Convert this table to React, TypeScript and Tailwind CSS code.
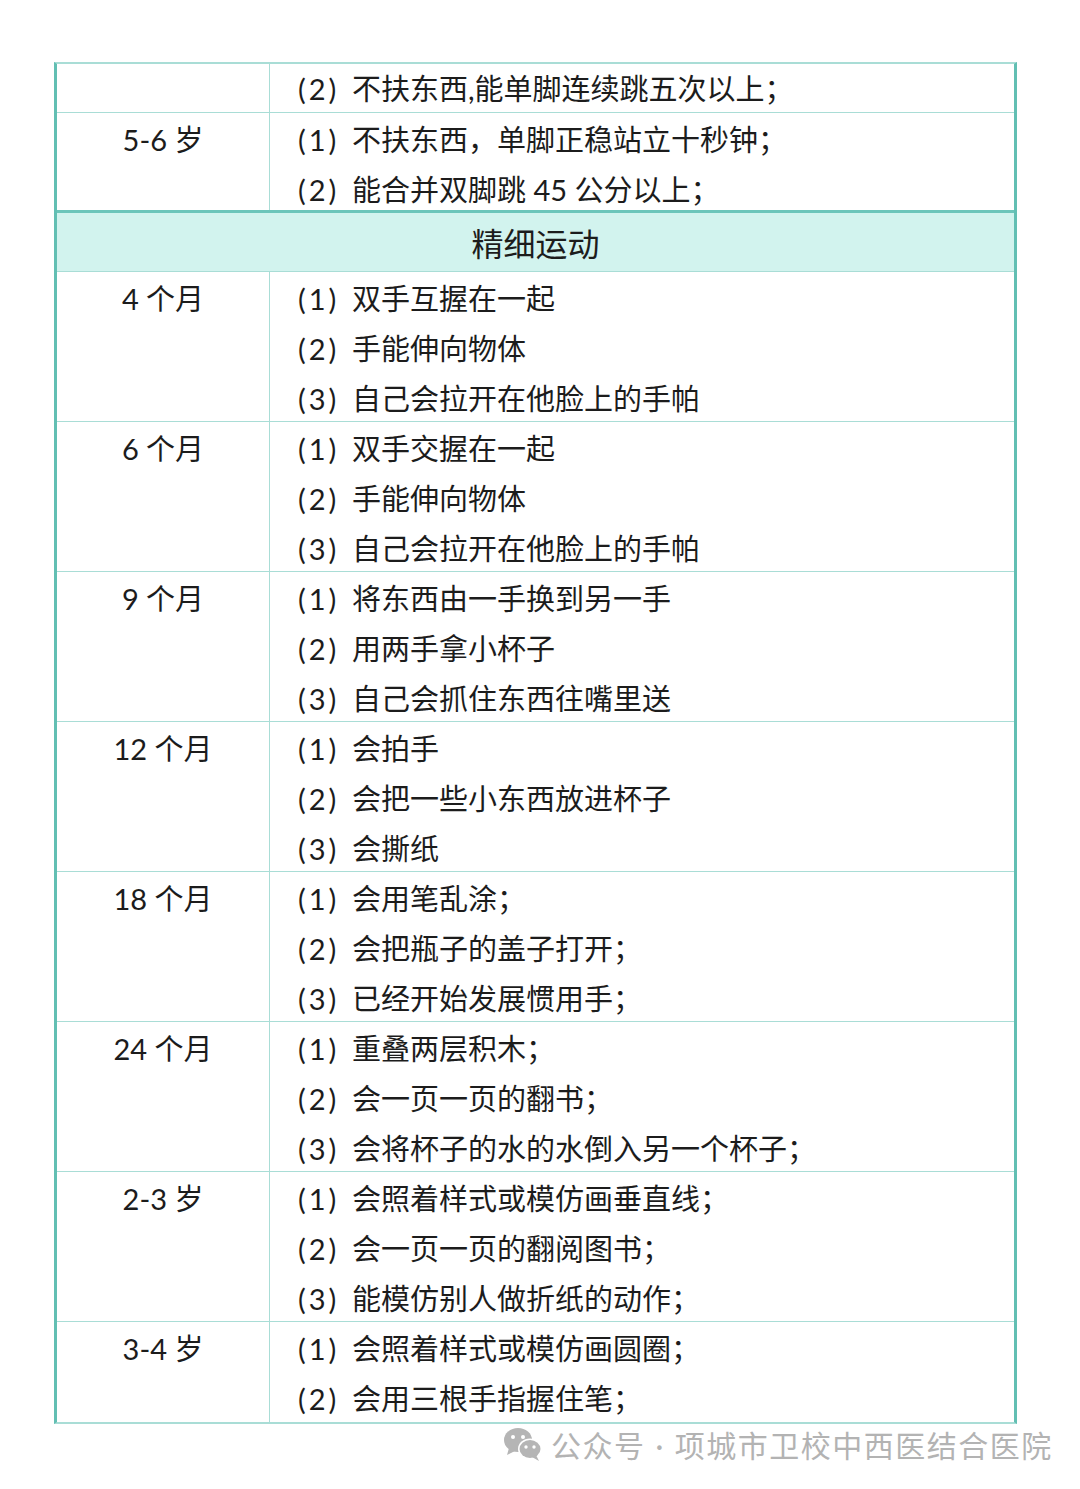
type Item = [number, string];

type Row = {
  age: string;
  items: Item[];
  h: string;
  last?: boolean;
  thick?: boolean;
  first?: boolean;
};

const before: Row[] = [
  { age: "", items: [[2, "不扶东西,能单脚连续跳五次以上；"]], h: "h-[49px]", first: true },
  {
    age: "5-6 岁",
    items: [
      [1, "不扶东西，单脚正稳站立十秒钟；"],
      [2, "能合并双脚跳 45 公分以上；"],
    ],
    h: "h-[100px]",
    thick: true,
  },
];

const fine: Row[] = [
  { age: "4 个月", items: [[1, "双手互握在一起"], [2, "手能伸向物体"], [3, "自己会拉开在他脸上的手帕"]], h: "h-[150px]" },
  { age: "6 个月", items: [[1, "双手交握在一起"], [2, "手能伸向物体"], [3, "自己会拉开在他脸上的手帕"]], h: "h-[150px]" },
  { age: "9 个月", items: [[1, "将东西由一手换到另一手"], [2, "用两手拿小杯子"], [3, "自己会抓住东西往嘴里送"]], h: "h-[150px]" },
  { age: "12 个月", items: [[1, "会拍手"], [2, "会把一些小东西放进杯子"], [3, "会撕纸"]], h: "h-[150px]" },
  { age: "18 个月", items: [[1, "会用笔乱涂；"], [2, "会把瓶子的盖子打开；"], [3, "已经开始发展惯用手；"]], h: "h-[150px]" },
  { age: "24 个月", items: [[1, "重叠两层积木；"], [2, "会一页一页的翻书；"], [3, "会将杯子的水的水倒入另一个杯子；"]], h: "h-[150px]" },
  { age: "2-3 岁", items: [[1, "会照着样式或模仿画垂直线；"], [2, "会一页一页的翻阅图书；"], [3, "能模仿别人做折纸的动作；"]], h: "h-[150px]" },
  { age: "3-4 岁", items: [[1, "会照着样式或模仿画圆圈；"], [2, "会用三根手指握住笔；"]], h: "h-[100px]", last: true },
];

function TableRow({ row }: { row: Row }) {
  const border = row.last ? "" : row.thick ? "border-b-[3px] border-[#6cc5ba]" : "border-b-[1.5px] border-[#a9ddd6]";
  return (
    <div className={`box-border flex ${row.h} ${border}`}>
      <div className={`w-[213px] shrink-0 border-r border-[#a9ddd6] text-center leading-[50px] ${row.first ? "" : "pt-[2px]"}`}>
        {row.age}
      </div>
      <div className={`flex-1 pl-[26px] leading-[50px] ${row.first ? "" : "pt-[2px]"}`}>
        {row.items.map(([n, t]) => (
          <div key={n} className="flex whitespace-nowrap">
            <span className="inline-block w-[56px] pl-[2px] tracking-[0.1em]">({n})</span>
            <span>{t}</span>
          </div>
        ))}
      </div>
    </div>
  );
}

function WechatIcon() {
  return (
    <svg width="40" height="36" viewBox="0 0 40 36">
      <ellipse cx="15" cy="13" rx="14" ry="12" fill="#b5b5b5" />
      <path d="M6 21 L4 28 L12 24 Z" fill="#b5b5b5" />
      <circle cx="10" cy="10" r="2" fill="#fff" />
      <circle cx="20" cy="10" r="2" fill="#fff" />
      <ellipse cx="27" cy="22" rx="12" ry="10.5" fill="#fff" />
      <ellipse cx="27" cy="22" rx="10.5" ry="9" fill="#b5b5b5" />
      <path d="M33 28 L36 34 L29 30 Z" fill="#b5b5b5" />
      <circle cx="23" cy="20" r="1.7" fill="#fff" />
      <circle cx="31" cy="20" r="1.7" fill="#fff" />
    </svg>
  );
}

export default function App() {
  return (
    <div
      className="min-h-[1489px] w-[1080px] bg-white pl-[54px] pt-[62px] text-[29px] text-[#1c1c1c]"
      style={{ fontFamily: '"Lato", "Noto Sans CJK SC", sans-serif' }}
    >
      <div className="box-border w-[963px] border-x-[3px] border-y-2 border-x-[#62bfb3] border-y-[#a9ddd6]">
        {before.map((r, i) => (
          <TableRow key={i} row={r} />
        ))}
        <div className="box-border flex h-[59px] items-center justify-center border-b-[1.5px] border-[#a9ddd6] bg-[#d2f3ee] pt-[4px] text-[32px]">
          精细运动
        </div>
        {fine.map((r, i) => (
          <TableRow key={i} row={r} />
        ))}
      </div>
      <div className="mt-[1px] flex items-center pl-[449px] text-[30px] leading-[40px] tracking-[0.05em] text-[#b3b3b3]">
        <WechatIcon />
        <span className="ml-[8px] flex items-center whitespace-nowrap">
          <span>公众号</span>
          <span className="px-[10px]">·</span>
          <span>项城市卫校中西医结合医院</span>
        </span>
      </div>
    </div>
  );
}
